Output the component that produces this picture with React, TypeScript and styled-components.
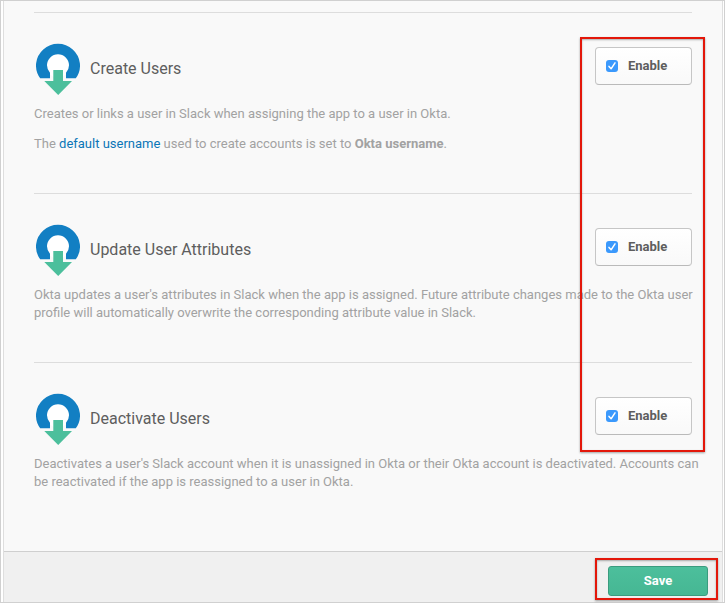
import React from 'react';
import styled, { createGlobalStyle } from 'styled-components';

const GlobalStyle = createGlobalStyle`
  *, *::before, *::after { box-sizing: border-box; }
  body {
    margin: 0;
    background: #ffffff;
    color: #a2a2a2;
    font-family: Roboto, "Liberation Sans", sans-serif;
    font-size: 13px;
    line-height: 18px;
  }
`;

const Frame = styled.div`
  padding: 0 1px 0 2px;
  border: 1px solid #d0d0d0;
`;

const Panel = styled.form`
  border: solid #dedede;
  border-width: 0 1px;
  background: #f9f9f9;
`;

const Content = styled.main`
  padding: 11px 30px 60px;
`;

const Settings = styled.div`
  position: relative;
  display: flex;
  flex-direction: column;
  gap: 40px;
`;

const Section = styled.section`
  padding-top: 30px;
  border-top: 1px solid #dddddd;
`;

const SectionHeader = styled.header`
  display: flex;
  align-items: center;
  gap: 10px;
  height: 52px;
  margin-bottom: 10px;
  padding-left: 2px;
`;

const Title = styled.h2`
  flex: 1;
  margin: 0;
  color: #5e5e5e;
  font-size: 16px;
  font-weight: 400;
  line-height: 20px;
`;

const EnableLabel = styled.label`
  display: flex;
  align-items: center;
  align-self: flex-start;
  gap: 10px;
  width: 97px;
  height: 38px;
  margin-top: 4px;
  padding: 0 10px;
  border: 1px solid #c6c6c6;
  border-bottom-color: #bababa;
  border-radius: 4px;
  background: linear-gradient(#ffffff, #f9f9f9);
  color: #5e5e5e;
  font-weight: 700;
  cursor: pointer;
`;

const Checkbox = styled.input`
  appearance: none;
  flex: none;
  width: 12px;
  height: 12px;
  margin: 0;
  border-radius: 3px;
  background: #ffffff;
  box-shadow: inset 0 0 0 1px #b5b5b5;

  &:checked {
    background: #3b99fc;
    box-shadow: none;
  }
`;

const CheckSlot = styled.span`
  display: grid;
  place-items: center;

  > * { grid-area: 1 / 1; }
  svg { pointer-events: none; }
  input:not(:checked) + svg { visibility: hidden; }
`;

const Description = styled.p`
  margin: 0 -8px 0 0;

  & + & { margin-top: 12px; }
`;

const TextLink = styled.a`
  color: #0b76b7;
  text-decoration: none;
`;

const Footer = styled.footer`
  display: flex;
  justify-content: flex-end;
  padding: 14px 14px 6px;
  border-top: 1px solid #cfcfcf;
  background: #f0f0f0;
`;

const SaveSlot = styled.div`
  position: relative;
`;

const SaveButton = styled.button`
  display: block;
  width: 100px;
  height: 30px;
  padding: 0;
  border: 1px solid #3a9c7e;
  border-radius: 3px;
  background: linear-gradient(#4cbf9c, #46b793);
  color: #ffffff;
  font: 700 13px/18px Roboto, "Liberation Sans", sans-serif;
  cursor: pointer;
`;

const Highlight = styled.div<{ $inset: string }>`
  position: absolute;
  inset: ${(p) => p.$inset};
  border: 2px solid #e3170a;
  box-shadow: 0 1px 2px rgba(0, 0, 0, 0.35), inset 0 1px 2px rgba(0, 0, 0, 0.3);
  pointer-events: none;
`;

const ListHighlight = styled(Highlight)`
  width: 125px;
`;

function ProvisionIcon() {
  return (
    <svg width="44" height="52" viewBox="0 0 44 52" aria-hidden="true">
      <circle cx="22" cy="22.5" r="12" fill="#fff" />
      <path
        d="M4.2 35.3A22 21.7 0 1 1 39.8 35.3H30V29.8A11 11 0 1 0 14 29.8V35.3Z"
        fill="#127fc3"
      />
      <path d="M17.3 27H27V38H36L22.2 52 8.3 38H17.3Z" fill="#4cbf9c" />
    </svg>
  );
}

interface SettingProps {
  title: string;
  children: React.ReactNode;
}

function Setting({ title, children }: SettingProps) {
  return (
    <Section>
      <SectionHeader>
        <ProvisionIcon />
        <Title>{title}</Title>
        <EnableLabel>
          <CheckSlot>
            <Checkbox type="checkbox" defaultChecked />
            <svg width="12" height="12" viewBox="0 0 12 12" aria-hidden="true">
              <path
                d="M3 6.4L5.1 8.8L9 2.9"
                fill="none"
                stroke="#fff"
                strokeWidth="1.5"
                strokeLinecap="round"
                strokeLinejoin="round"
              />
            </svg>
          </CheckSlot>
          Enable
        </EnableLabel>
      </SectionHeader>
      {children}
    </Section>
  );
}

export default function App() {
  return (
    <>
      <GlobalStyle />
      <Frame>
        <Panel onSubmit={(e) => e.preventDefault()}>
          <Content>
            <Settings>
              <Setting title="Create Users">
                <Description>
                  Creates or links a user in Slack when assigning the app to a user in Okta.
                </Description>
                <Description>
                  The <TextLink href="#username">default username</TextLink> used to create
                  accounts is set to <b>Okta username</b>.
                </Description>
              </Setting>
              <Setting title="Update User Attributes">
                <Description>
                  Okta updates a user's attributes in Slack when the app is assigned. Future
                  attribute changes made to the Okta user profile will automatically overwrite
                  the corresponding attribute value in Slack.
                </Description>
              </Setting>
              <Setting title="Deactivate Users">
                <Description>
                  Deactivates a user's Slack account when it is unassigned in Okta or their Okta
                  account is deactivated. Accounts can be reactivated if the app is reassigned to
                  a user in Okta.
                </Description>
              </Setting>
              <ListHighlight $inset="25px -13px 39px auto" />
            </Settings>
          </Content>
          <Footer>
            <SaveSlot>
              <SaveButton type="submit">Save</SaveButton>
              <Highlight $inset="-8px -10px -4px -13px" />
            </SaveSlot>
          </Footer>
        </Panel>
      </Frame>
    </>
  );
}
